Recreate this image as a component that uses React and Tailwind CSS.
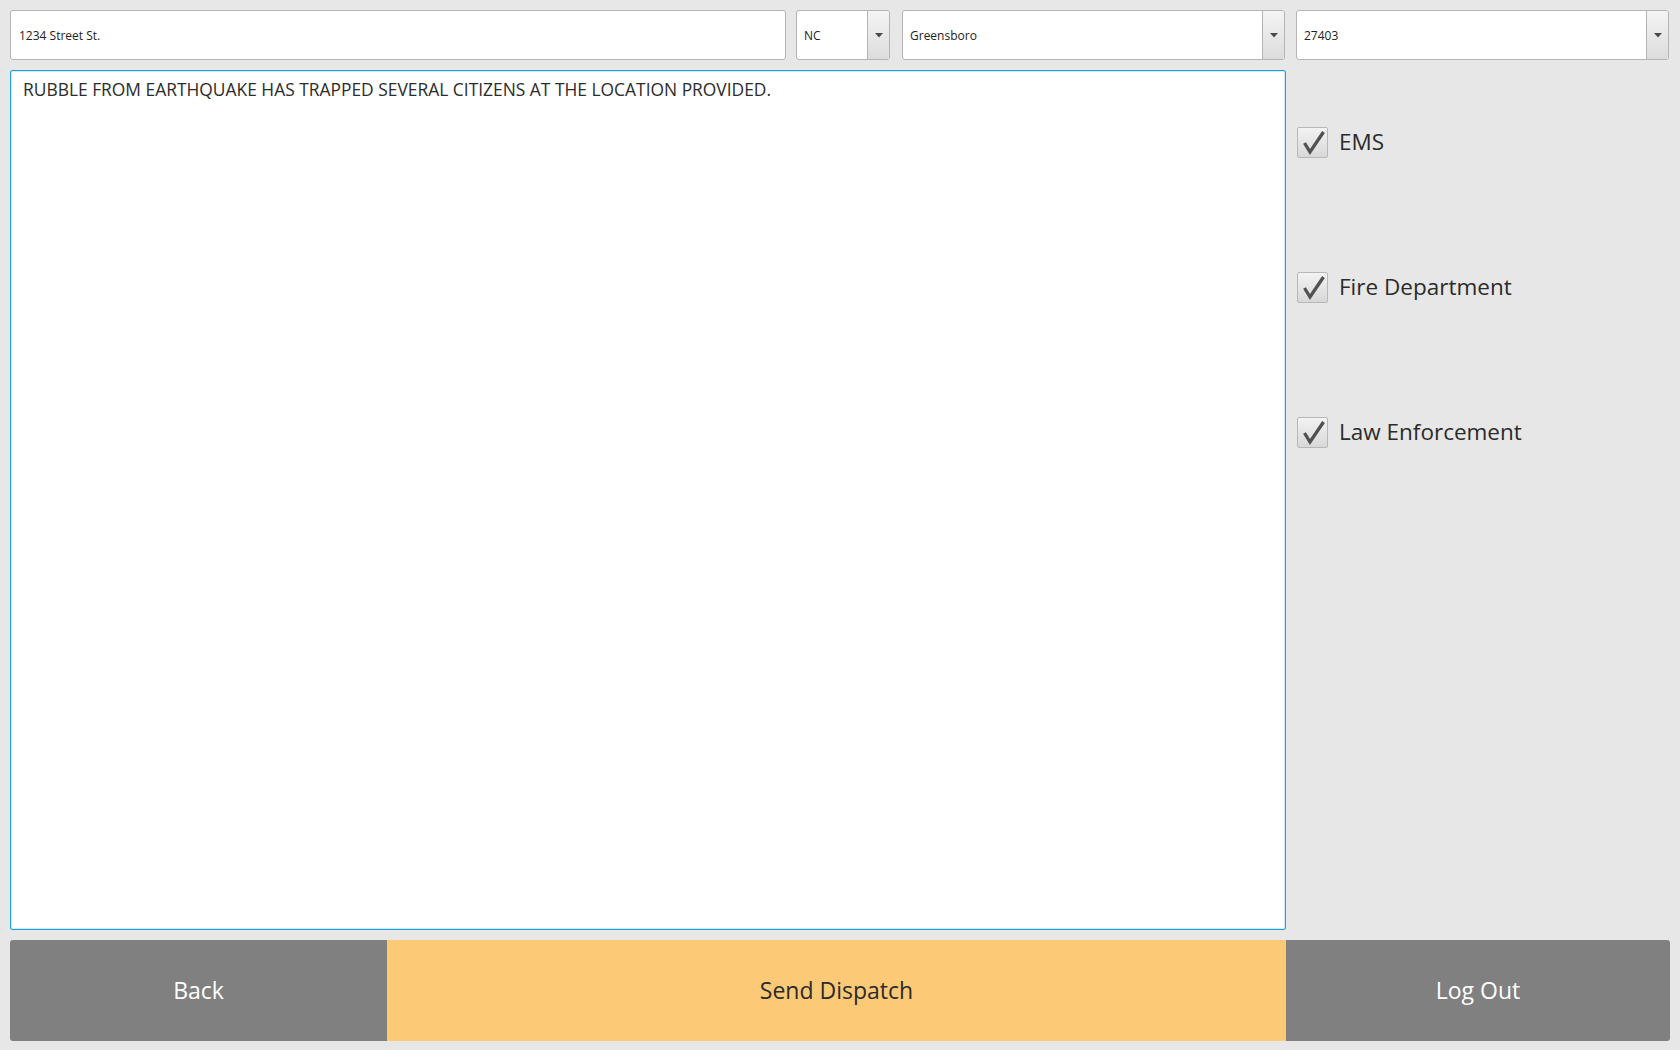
import React from "react";

const font = { fontFamily: '"Open Sans", "Noto Sans", sans-serif' };

function Arrow() {
  return (
    <svg width="8" height="5" viewBox="0 0 8 5">
      <path d="M0 0 L8 0 L4 4.5 Z" fill="#4a4a4a" />
    </svg>
  );
}

function Combo({ value, className }) {
  return (
    <div className={`flex h-full rounded-[3px] border border-[#b4b4b4] bg-white overflow-hidden ${className}`}>
      <div className="flex-1 flex items-center pl-[7px] pt-[1px] text-[12px] text-[#222]">{value}</div>
      <div className="w-[22px] flex items-center justify-center border-l border-[#b4b4b4] bg-gradient-to-b from-[#f4f4f4] to-[#dcdcdc]">
        <Arrow />
      </div>
    </div>
  );
}

function Check({ label }) {
  return (
    <div className="flex items-center h-[31px]">
      <div className="w-[31px] h-[31px] rounded-[2px] border border-[#b8b8b8] bg-gradient-to-b from-[#f3f3f3] to-[#d8d8d8]">
        <svg width="29" height="29" viewBox="0 0 29 29">
          <path d="M6.5 15 L12 24 L25.5 4" fill="none" stroke="#515151" strokeWidth="3.3" strokeLinejoin="miter" />
        </svg>
      </div>
      <span className="ml-[11px] text-[22.5px] text-[#2b2b2b] leading-none">{label}</span>
    </div>
  );
}

export default function App() {
  return (
    <div style={font} className="w-[1680px] h-[1050px] overflow-hidden bg-[#e7e7e7] px-[10px] pt-[10px] flex flex-col">
      <div className="flex h-[50px] shrink-0">
        <div className="w-[776px] h-full rounded-[3px] border border-[#b4b4b4] bg-white flex items-center pl-[8px] pt-[1px] text-[12px] text-[#222]">
          1234 Street St.
        </div>
        <Combo value="NC" className="ml-[10px] w-[94px]" />
        <Combo value="Greensboro" className="ml-[12px] w-[383px]" />
        <Combo value="27403" className="ml-[11px] w-[373px]" />
      </div>
      <div className="flex mt-[10px] h-[860px] shrink-0">
        <div className="w-[1276px] h-full bg-white border border-[#1ba1e2] shadow-[inset_0_0_0_1px_#cfe9f7] rounded-[2px] px-[12px] pt-[5px] text-[17.4px] text-[#2b2b2b]">
          RUBBLE FROM EARTHQUAKE HAS TRAPPED SEVERAL CITIZENS AT THE LOCATION PROVIDED.
        </div>
        <div className="ml-[11px] flex flex-col gap-[114px] pt-[57px]">
          <Check label="EMS" />
          <Check label="Fire Department" />
          <Check label="Law Enforcement" />
        </div>
      </div>
      <div className="flex mt-[10px] h-[101px] shrink-0">
        <button className="w-[377px] h-full bg-[#808080] rounded-l-[3px] text-white text-[23px]">Back</button>
        <button className="w-[899px] h-full bg-[#fcc977] text-[#2b2b2b] text-[23px]">Send Dispatch</button>
        <button className="w-[384px] h-full bg-[#808080] rounded-r-[3px] text-white text-[23px]">Log Out</button>
      </div>
    </div>
  );
}
